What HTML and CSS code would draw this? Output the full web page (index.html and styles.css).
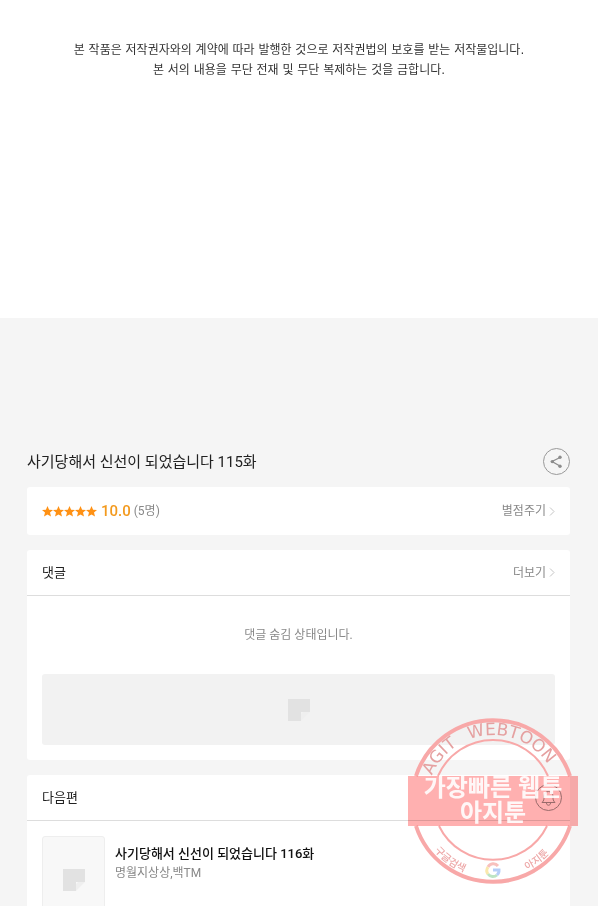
FILE: index.html
```html
<!DOCTYPE html>
<html lang="ko">
<head>
    <meta charset="UTF-8">
    <meta name="viewport" content="width=device-width, initial-scale=1.0">
    <title>사기당해서 신선이 되었습니다 115화</title>
    <link rel="stylesheet" href="styles.css">
</head>
<body>
    <section class="notice">
        <p>본 작품은 저작권자와의 계약에 따라 발행한 것으로 저작권법의 보호를 받는 저작물입니다.<br>본 서의 내용을 무단 전재 및 무단 복제하는 것을 금합니다.</p>
    </section>

    <main class="viewer-end">
        <header class="episode">
            <h1>사기당해서 신선이 되었습니다 115화</h1>
            <button type="button" class="round-btn" aria-label="공유">
                <svg width="27" height="27" viewBox="0 0 27 27">
                    <circle cx="13.5" cy="13.5" r="13" fill="none" stroke="#999"/>
                    <path d="M17 9.500 9 13.500 17 18" fill="none" stroke="#8c8c8c" stroke-width="1.3"/>
                    <circle cx="17" cy="9.3" r="1.7" fill="#8c8c8c"/>
                    <circle cx="9.3" cy="13.6" r="1.7" fill="#8c8c8c"/>
                    <circle cx="17" cy="18.2" r="1.7" fill="#8c8c8c"/>
                </svg>
            </button>
        </header>

        <section class="card rating">
            <svg class="stars" width="55" height="11" viewBox="0 0 55 11" fill="#ff9114">
                <path id="star" d="M5.500 0 7.100 3.700 11 4 8 6.600 9 10.500 5.500 8.400 2 10.500 3 6.600 0 4 3.900 3.700z"/>
                <use href="#star" x="11"/>
                <use href="#star" x="22"/>
                <use href="#star" x="33"/>
                <use href="#star" x="44"/>
            </svg>
            <strong class="score">10.0</strong>
            <span class="count">(5명)</span>
            <a class="more" href="#">별점주기
                <svg width="6" height="9" viewBox="0 0 6 9"><path d="M1 .5 5 4.500 1 8.500" fill="none" stroke="#c4c4c4"/></svg>
            </a>
        </section>

        <section class="card comments">
            <div class="card-head">
                <h2>댓글</h2>
                <a class="more" href="#">더보기
                    <svg width="6" height="9" viewBox="0 0 6 9"><path d="M1 .5 5 4.500 1 8.500" fill="none" stroke="#c4c4c4"/></svg>
                </a>
            </div>
            <p class="hidden-msg">댓글 숨김 상태입니다.</p>
            <div class="banner">
                <svg width="22" height="22" viewBox="0 0 22 22"><path d="M0 0h22v13h-9v9H0z" fill="#e2e2e2"/><path d="M15 13h7l-9 9v-7z" fill="#efefef"/></svg>
            </div>
        </section>

        <section class="card">
            <div class="card-head next-head">
                <h2>다음편</h2>
                <button type="button" class="round-btn" aria-label="알림">
                    <svg width="27" height="27" viewBox="0 0 27 27" fill="none" stroke="#999">
                        <circle cx="13.5" cy="13.5" r="13"/>
                        <path d="M7 18.500h13c-2-2-2-3-2-6 0-3-2-5-4.500-5S9 9.500 9 12.500c0 3 0 4-2 6zM11.500 19c0 3 4 3 4 0"/>
                    </svg>
                </button>
            </div>
            <div class="next">
                <div class="thumb">
                    <svg width="22" height="22" viewBox="0 0 22 22"><path d="M0 0h22v13h-9v9H0z" fill="#e2e2e2"/><path d="M15 13h7l-9 9v-7z" fill="#efefef"/></svg>
                </div>
                <div class="next-info">
                    <a class="next-title" href="#">사기당해서 신선이 되었습니다 116화</a>
                    <p class="author">명월지상상,백TM</p>
                </div>
            </div>
        </section>
    </main>

    <svg class="stamp" width="170" height="170" viewBox="0 0 170 170">
        <defs>
            <path id="arc-top" d="M19 85a66 66 0 0 1 132 0"/>
            <path id="arc-bottom" d="M8 85a77 77 0 0 0 154 0"/>
        </defs>
        <!-- rings stop at the band -->
        <g fill="none" stroke="#f8a8a8">
            <path d="M8 60a81 81 0 0 1 154 0M8 110a81 81 0 0 0 154 0" stroke-width="4"/>
            <path d="M30 60a60 60 0 0 1 110 0M31 110a60 60 0 0 0 108 0" stroke-width="2"/>
        </g>
        <rect class="stamp-band" y="60" width="170" height="50"/>
        <g class="stamp-latin">
            <text><textPath href="#arc-top" startOffset="26">AGIT</textPath></text>
            <text><textPath href="#arc-top" startOffset="79">WEBTOON</textPath></text>
        </g>
        <g class="stamp-name" text-anchor="middle">
            <text x="85" y="80">가장빠른 웹툰</text>
            <text x="85" y="105">아지툰</text>
        </g>
        <g class="stamp-small">
            <text><textPath href="#arc-bottom" startOffset="54">구글검색</textPath></text>
            <text><textPath href="#arc-bottom" startOffset="156">아지툰</textPath></text>
        </g>
        <g fill="none" stroke-width="3" opacity=".65">
            <path d="M90 150A6 6 0 0 0 80 151" stroke="#f5a09a"/>
            <path d="M80 151A6 6 0 0 0 80 158" stroke="#f8dc80"/>
            <path d="M80 158A6 6 0 0 0 89 159" stroke="#9bd6a5"/>
            <path d="M85 154h6a6 6 0 0 1-2 5" stroke="#8fb5f5"/>
        </g>
    </svg>
</body>
</html>
```
FILE: styles.css
```css
* {
    box-sizing: border-box;
}

body {
    position: relative;
    margin: 0;
    height: 100vh;
    overflow: hidden;
    background: #f5f5f5;
    color: #222;
    font-family: Roboto, "Noto Sans CJK KR", sans-serif;
    font-size: 12px;
    line-height: 20px;
}

h1, h2, p {
    margin: 0;
    font-weight: normal;
}

a {
    color: inherit;
    text-decoration: none;
}

svg {
    display: block;
}

.notice {
    height: 318px;
    padding-top: 40px;
    background: #fff;
    color: #333;
    font-family: "DejaVu Sans", "Noto Sans CJK KR", sans-serif;
    text-align: center;
}

.viewer-end {
    padding: 130px 28px 0 27px;
}

.episode {
    display: flex;
    align-items: center;
    justify-content: space-between;
    margin-bottom: 12px;
}

.episode h1 {
    font-size: 15px;
}

.round-btn {
    padding: 0;
    border: none;
    background: none;
    cursor: pointer;
}

.card {
    margin-bottom: 15px;
    border-radius: 3px;
    background: #fff;
}

.rating {
    display: flex;
    align-items: center;
    height: 48px;
    padding: 0 15px;
}

.score {
    margin: 0 3px 0 4px;
    color: #f39a1e;
    font-size: 15px;
    font-weight: 500;
}

.count {
    color: #888;
}

.more {
    display: flex;
    align-items: center;
    gap: 3px;
    margin-left: auto;
    color: #888;
}

.card-head {
    display: flex;
    align-items: center;
    height: 46px;
    padding: 0 15px;
    border-bottom: 1px solid #ddd;
}

.card-head h2 {
    font-size: 13px;
}

.next-head {
    justify-content: space-between;
    padding-right: 8px;
}

.comments {
    padding-bottom: 15px;
}

.hidden-msg {
    padding: 29px 0;
    color: #888;
    text-align: center;
}

.banner {
    display: flex;
    align-items: center;
    justify-content: center;
    height: 71px;
    margin: 0 15px;
    border-radius: 3px;
    background: #f2f2f2;
}

.next {
    display: flex;
    gap: 10px;
    padding: 15px;
}

.thumb {
    display: flex;
    align-items: center;
    justify-content: center;
    width: 63px;
    height: 88px;
    border: 1px solid #eee;
    border-radius: 3px;
    background: #f8f8f8;
}

.next-info {
    padding-top: 8px;
}

.next-title {
    color: #111;
    font-size: 13px;
    font-weight: 500;
}

.author {
    color: #888;
    line-height: 18px;
}

.stamp {
    position: absolute;
    top: 716px;
    right: 20px;
    pointer-events: none;
}

.stamp-band {
    fill: #ffb0b0;
    mix-blend-mode: multiply;
}

.stamp-latin {
    fill: #e5a0a0;
    font-family: "DejaVu Sans", sans-serif;
    font-size: 17px;
}

.stamp-name {
    fill: #fff;
    font-size: 24px;
    font-weight: bold;
    opacity: .9;
}

.stamp-small {
    fill: #eda6a6;
    font-size: 10px;
    font-weight: 500;
}
```
